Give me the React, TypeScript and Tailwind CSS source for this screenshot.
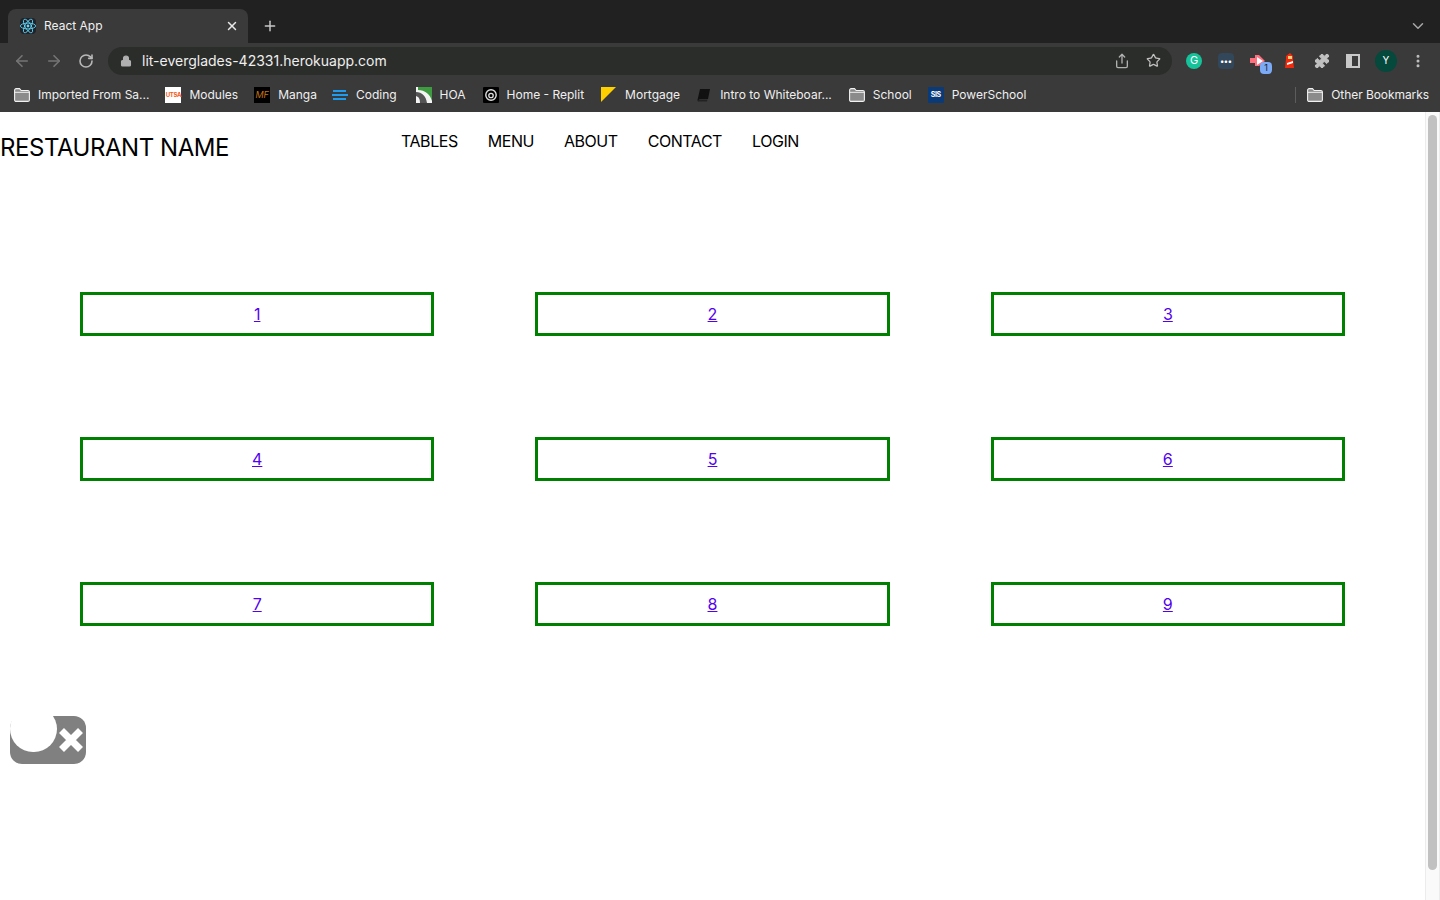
import React from 'react';
import { ArrowLeft, ArrowRight, ChevronDown, Lock, MoreVertical, Plus, Puzzle, RotateCw, Share, Star, X } from 'lucide-react';

const FolderIcon = ({ className = '' }: { className?: string }) => (
  <svg viewBox="0 0 16 14" className={`h-[14px] w-4 shrink-0 ${className}`} fill="none">
    <path d="M.6 12V2.2C.6 1.3 1.3.6 2.2.6h3.3l1.7 1.9h6.6c.9 0 1.6.7 1.6 1.6V12c0 .8-.7 1.4-1.6 1.4H2.2C1.3 13.4.6 12.8.6 12Z" fill="#8b8b8b" stroke="#f1f1f1" strokeWidth="1.1" />
    <path d="M.6 4.3h14.8" stroke="#f1f1f1" strokeWidth="1" />
  </svg>
);

const ReactLogo = () => (
  <div className="flex h-4 w-4 items-center justify-center rounded-sm bg-[#20232a]">
    <svg viewBox="-11.5 -10.2 23 20.4" className="h-4 w-4" fill="none" stroke="#61dafb" strokeWidth="1.2">
      <circle r="2" fill="#61dafb" stroke="none" />
      <ellipse rx="11" ry="4.2" />
      <ellipse rx="11" ry="4.2" transform="rotate(60)" />
      <ellipse rx="11" ry="4.2" transform="rotate(120)" />
    </svg>
  </div>
);

const bookmarks = [
  { label: 'Imported From Sa...', gap: 'mr-[16px]', icon: <FolderIcon /> },
  {
    label: 'Modules',
    gap: 'mr-[16px]',
    icon: (
      <div className="flex h-4 w-4 items-center justify-center bg-white text-[6px] font-bold tracking-tighter text-[#f15a22]">UTSA</div>
    ),
  },
  {
    label: 'Manga',
    gap: 'mr-[15px]',
    icon: (
      <div className="flex h-4 w-4 items-center justify-center bg-black text-[9px] italic text-[#c87514]">MF</div>
    ),
  },
  {
    label: 'Coding',
    gap: 'mr-[19px]',
    icon: (
      <div className="flex h-4 w-4 flex-col items-center justify-center gap-[2px]">
        <div className="h-[2px] w-[13px] bg-[#1f9cf0]" />
        <div className="h-[2px] w-4 bg-[#1f9cf0]" />
        <div className="h-[2px] w-[13px] bg-[#1f9cf0]" />
      </div>
    ),
  },
  {
    label: 'HOA',
    gap: 'mr-[17px]',
    icon: (
      <svg viewBox="0 0 16 16" className="h-4 w-4">
        <rect width="16" height="16" fill="#f4f4f4" />
        <path d="M2 0h14v14C14 7 9 3 2 3Z" fill="#3f9b3f" />
        <path d="M0 5c6 0 10 4 11 11H4C4 12 3 10 0 9Z" fill="#555" />
      </svg>
    ),
  },
  {
    label: 'Home - Replit',
    gap: 'mr-[17px]',
    icon: (
      <svg viewBox="0 0 16 16" className="h-4 w-4">
        <rect width="16" height="16" rx="1" fill="#000" />
        <circle cx="8" cy="8" r="5.2" fill="none" stroke="#ddd" strokeWidth="1.4" />
        <circle cx="8" cy="8.5" r="2.2" fill="none" stroke="#ddd" strokeWidth="1.3" />
      </svg>
    ),
  },
  {
    label: 'Mortgage',
    gap: 'mr-[16px]',
    icon: (
      <svg viewBox="0 0 16 16" className="h-4 w-4">
        <path d="M0 0h15L0 15Z" fill="#ffd000" />
      </svg>
    ),
  },
  {
    label: 'Intro to Whiteboar...',
    gap: 'mr-[17px]',
    icon: (
      <svg viewBox="0 0 16 16" className="h-4 w-4">
        <path d="M4 2h10l-2 10H3.5L2 14.5 1.5 13Z" fill="#111" />
        <path d="M2.5 12.5h9l-.5 2H2Z" fill="#222" />
      </svg>
    ),
  },
  { label: 'School', gap: 'mr-[16px]', icon: <FolderIcon /> },
  {
    label: 'PowerSchool',
    gap: '',
    icon: (
      <div className="flex h-4 w-4 items-center justify-center rounded-[1px] bg-[#0b3a78] text-[7px] font-bold tracking-tighter text-white">SIS</div>
    ),
  },
];

const tables = [1, 2, 3, 4, 5, 6, 7, 8, 9];

const BrowserChrome = () => (
  <div className="font-['Inter','Liberation_Sans',sans-serif] text-white">
    {/* tab strip */}
    <div className="flex h-[43px] items-end bg-[#212121] pl-2">
      <div className="flex h-[34px] w-[240px] items-center rounded-t-lg bg-[#3a3a3a] pl-3 pr-[9px]">
        <ReactLogo />
        <span className="ml-2 flex-1 text-xs text-[#f0f0f0]">React App</span>
        <X className="h-[14px] w-[14px] text-[#e8e8e8]" strokeWidth={2.5} />
      </div>
      <div className="ml-[14px] flex h-[34px] items-center">
        <Plus className="h-4 w-4 text-[#c8c8c8]" strokeWidth={2.2} />
      </div>
      <div className="ml-auto mr-[13px] flex h-[34px] items-center">
        <ChevronDown className="h-[18px] w-[18px] text-[#a8a8a8]" strokeWidth={2} />
      </div>
    </div>

    {/* address bar */}
    <div className="flex h-[35px] items-center bg-[#3a3a3a] pl-[13px] pr-3">
      <ArrowLeft className="h-[18px] w-[18px] text-[#757575]" strokeWidth={2.2} />
      <ArrowRight className="ml-[14px] h-[18px] w-[18px] text-[#757575]" strokeWidth={2.2} />
      <RotateCw className="ml-[15px] h-4 w-4 text-[#b8b8b8]" strokeWidth={2.4} />
      <div className="ml-[14px] flex h-7 w-[1064px] items-center rounded-full bg-[#2b2d2a] pl-3 pr-[11px]">
        <Lock className="h-3 w-3 fill-[#b0b0b0] text-[#b0b0b0]" strokeWidth={2.2} />
        <span className="ml-[10px] flex-1 text-sm text-[#efefef]">lit-everglades-42331.herokuapp.com</span>
        <Share className="h-4 w-4 text-[#b0b0b0]" strokeWidth={2} />
        <Star className="ml-4 h-[15px] w-[15px] text-[#c0c0c0]" strokeWidth={2} />
      </div>
      <div className="ml-[14px] flex h-4 w-4 items-center justify-center rounded-full bg-[#15c39a] text-[11px] text-white">G</div>
      <div className="ml-4 flex h-4 w-4 items-center justify-center rounded-sm bg-[#33475b] text-[8px] leading-none font-bold text-white">•••</div>
      <div className="relative ml-4 h-4 w-4">
        <svg viewBox="0 0 16 16" className="h-4 w-4">
          <path d="M0 5h5V2l4 0 6 6-6 5H5v-3H0Z" fill="#ff6f7d" />
          <path d="M7 4l6 4-6 4Z" fill="#fff" />
        </svg>
        <div className="absolute left-[10px] top-[9px] flex h-3 w-3 items-center justify-center rounded-sm bg-[#7baaf7] text-[9px] text-[#222]">1</div>
      </div>
      <div className="ml-4 h-4 w-4">
        <svg viewBox="0 0 16 16" className="h-4 w-4">
          <path d="M8 0l3 3v3l1 9H3l1-9V3Z" fill="#f02a0c" />
          <rect x="6" y="3" width="4" height="3" fill="#ffd27a" />
          <path d="M5 10l6-2v2l-6 2Z" fill="#fff" />
        </svg>
      </div>
      <Puzzle className="ml-4 h-4 w-4 fill-[#c0c0c0] text-[#c0c0c0]" strokeWidth={1.5} />
      <div className="ml-4 flex h-[14px] w-[14px] justify-end border-2 border-[#c8c8c8] bg-[#c8c8c8]">
        <div className="h-full w-[6px] bg-[#3a3a3a]" />
      </div>
      <div className="ml-[15px] flex h-[22px] w-[22px] items-center justify-center rounded-full bg-[#04493b] text-[10px] text-white">Y</div>
      <MoreVertical className="ml-[13px] h-4 w-4 text-[#c0c0c0]" strokeWidth={2.5} />
    </div>

    {/* bookmarks */}
    <div className="flex h-[34px] items-center bg-[#3a3a3a] pl-[14px] pr-[11px] text-xs text-[#efefef]">
      {bookmarks.map((b) => (
        <div key={b.label} className={`flex items-center gap-2 ${b.gap}`}>
          {b.icon}
          <span>{b.label}</span>
        </div>
      ))}
      <div className="ml-auto flex items-center">
        <div className="mr-[11px] h-4 w-px bg-[#5c5c5c]" />
        <FolderIcon />
        <span className="ml-2 tracking-[-0.07px]">Other Bookmarks</span>
      </div>
    </div>
  </div>
);

export default function App() {
  return (
    <div className="flex h-[900px] flex-col overflow-hidden bg-white font-['Inter','Liberation_Sans',sans-serif]">
      <BrowserChrome />
      <div className="flex min-h-0 flex-1">
        <div className="min-w-0 flex-1">
          <header className="flex h-[72px] items-start">
            <h1 className="mt-[21px] w-[401px] whitespace-nowrap text-2xl leading-[30px] tracking-[-0.45px] text-black">RESTAURANT NAME</h1>
            <nav className="mt-[20px] flex gap-[30px] text-base leading-[19px] tracking-[-0.45px] text-black">
              <a>TABLES</a>
              <a>MENU</a>
              <a>ABOUT</a>
              <a>CONTACT</a>
              <a>LOGIN</a>
            </nav>
          </header>
          <div className="mt-[108px] grid grid-cols-3 gap-[101px] px-20">
            {tables.map((n) => (
              <div key={n} className="flex h-11 items-center justify-center border-[3px] border-[#008000]">
                <a href="#" className="text-base text-[#5500ee] underline">{n}</a>
              </div>
            ))}
          </div>
          <div className="relative ml-[10px] mt-[90px] h-12 w-[76px] rounded-xl bg-[#808080]">
            <div className="absolute left-0 top-[-10px] h-[46px] w-[47px] rounded-full bg-white" />
            <svg viewBox="0 0 24 24" className="absolute left-[49px] top-[12px] h-6 w-6">
              <path d="M2.5 2.5l19 19M21.5 2.5l-19 19" stroke="#fff" strokeWidth="7" />
            </svg>
          </div>
        </div>
        {/* scrollbar */}
        <div className="flex w-[15px] justify-center border-x border-[#ececec] bg-[#fafafa] py-[3px]">
          <div className="h-[755px] w-[9px] rounded-full bg-[#c1c1c1]" />
        </div>
      </div>
    </div>
  );
}
